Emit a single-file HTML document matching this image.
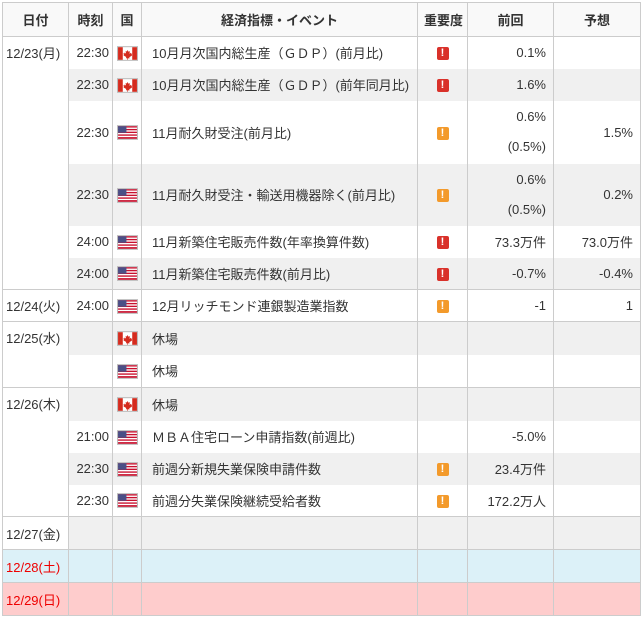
<!DOCTYPE html>
<html><head><meta charset="utf-8"><style>
body{margin:0;background:#fff;font-family:"Liberation Sans","Noto Sans CJK JP",sans-serif;font-size:13px;color:#333}
table{position:absolute;left:2px;top:2px;border-collapse:collapse;table-layout:fixed;width:638px}
td,th{border-left:1px solid #ccc;border-right:1px solid #ccc;padding:0 6px;white-space:nowrap;overflow:hidden}
th{background:#f9f9f9;font-weight:bold;height:33px;border-top:1px solid #ccc;border-bottom:1px solid #ccc;text-align:center}
tr.g td{background:#f0f0f0}
tr.top td{border-top:1px solid #ccc}
td.d{background:#fff!important;vertical-align:top;padding:6px 0 0 3px}
td.t{text-align:right;padding-right:3px}
td.e{padding-left:10px}
td.f{text-align:center;padding:0}
td.i{text-align:center;padding:0}
td.n{text-align:right;padding-right:7px}
td.two{line-height:30px}
tr.sat td{background:#dcf1f8!important;color:#e00}
tr.sun td{background:#fecccc!important;color:#e00}
tr.last td{border-bottom:1px solid #ccc}
.ic{display:inline-block;width:12px;height:13px;border-radius:2px;color:#fff;font-weight:bold;font-size:11px;line-height:13px;vertical-align:middle}
.r{background:#d9312a}.o{background:#f39a2b}
svg{vertical-align:middle}
</style></head><body>
<svg width="0" height="0" style="position:absolute"><defs>
<symbol id="ca" viewBox="0 0 20 14"><rect x=".5" y=".5" width="19" height="13" fill="#fff" stroke="#bbb"/><rect x="1" y="1" width="4.5" height="12" fill="#d52b1e"/><rect x="14.5" y="1" width="4.5" height="12" fill="#d52b1e"/><path d="M10 3.5l1 1.8 1.3-.6-.4 2.6 1.3-1 .3.9 1-.2-.6 1.6.5.4-2.7 1.5.3 1.2H10.3v1.3h-.6V11.5H8.5l.3-1.2-2.7-1.5.5-.4-.6-1.6 1 .2.3-.9 1.3 1-.4-2.6 1.3.6z" fill="#d52b1e"/></symbol>
<symbol id="us" viewBox="0 0 20 14"><rect x=".5" y=".5" width="19" height="13" fill="#fff" stroke="#bbb"/><g fill="#c8102e"><rect x="1" y="1" width="18" height="1.3"/><rect x="1" y="3.6" width="18" height="1.3"/><rect x="1" y="6.2" width="18" height="1.3"/><rect x="1" y="8.8" width="18" height="1.3"/><rect x="1" y="11.4" width="18" height="1.6"/></g><rect x="1" y="1" width="8" height="6.2" fill="#4a4f86"/></symbol>
</defs></svg>
<table>
<colgroup><col style="width:66px"><col style="width:44px"><col style="width:29px"><col style="width:276px"><col style="width:50px"><col style="width:86px"><col style="width:87px"></colgroup>
<tr><th>日付</th><th>時刻</th><th>国</th><th>経済指標・イベント</th><th>重要度</th><th>前回</th><th>予想</th></tr>
<tr class="top" style="height:32px"><td class="d" rowspan="6">12/23(月)</td><td class="t">22:30</td><td class="f"><svg width="21" height="15"><use href="#ca"/></svg></td><td class="e">10月月次国内総生産（ＧＤＰ）(前月比)</td><td class="i"><span class="ic r">!</span></td><td class="n">0.1%</td><td></td></tr>
<tr class="g" style="height:32px"><td class="t">22:30</td><td class="f"><svg width="21" height="15"><use href="#ca"/></svg></td><td class="e">10月月次国内総生産（ＧＤＰ）(前年同月比)</td><td class="i"><span class="ic r">!</span></td><td class="n">1.6%</td><td></td></tr>
<tr style="height:63px"><td class="t">22:30</td><td class="f"><svg width="21" height="15"><use href="#us"/></svg></td><td class="e">11月耐久財受注(前月比)</td><td class="i"><span class="ic o">!</span></td><td class="n two">0.6%<br>(0.5%)</td><td class="n">1.5%</td></tr>
<tr class="g" style="height:62px"><td class="t">22:30</td><td class="f"><svg width="21" height="15"><use href="#us"/></svg></td><td class="e">11月耐久財受注・輸送用機器除く(前月比)</td><td class="i"><span class="ic o">!</span></td><td class="n two">0.6%<br>(0.5%)</td><td class="n">0.2%</td></tr>
<tr style="height:32px"><td class="t">24:00</td><td class="f"><svg width="21" height="15"><use href="#us"/></svg></td><td class="e">11月新築住宅販売件数(年率換算件数)</td><td class="i"><span class="ic r">!</span></td><td class="n">73.3万件</td><td class="n">73.0万件</td></tr>
<tr class="g" style="height:32px"><td class="t">24:00</td><td class="f"><svg width="21" height="15"><use href="#us"/></svg></td><td class="e">11月新築住宅販売件数(前月比)</td><td class="i"><span class="ic r">!</span></td><td class="n">-0.7%</td><td class="n">-0.4%</td></tr>
<tr class="top" style="height:32px"><td class="d" style="vertical-align:middle;padding-top:0">12/24(火)</td><td class="t">24:00</td><td class="f"><svg width="21" height="15"><use href="#us"/></svg></td><td class="e">12月リッチモンド連銀製造業指数</td><td class="i"><span class="ic o">!</span></td><td class="n">-1</td><td class="n">1</td></tr>
<tr class="top g" style="height:33px"><td class="d" rowspan="2">12/25(水)</td><td></td><td class="f"><svg width="21" height="15"><use href="#ca"/></svg></td><td class="e">休場</td><td></td><td></td><td></td></tr>
<tr style="height:33px"><td></td><td class="f"><svg width="21" height="15"><use href="#us"/></svg></td><td class="e">休場</td><td></td><td></td><td></td></tr>
<tr class="top g" style="height:33px"><td class="d" rowspan="4">12/26(木)</td><td></td><td class="f"><svg width="21" height="15"><use href="#ca"/></svg></td><td class="e">休場</td><td></td><td></td><td></td></tr>
<tr style="height:32px"><td class="t">21:00</td><td class="f"><svg width="21" height="15"><use href="#us"/></svg></td><td class="e">ＭＢＡ住宅ローン申請指数(前週比)</td><td></td><td class="n">-5.0%</td><td></td></tr>
<tr class="g" style="height:32px"><td class="t">22:30</td><td class="f"><svg width="21" height="15"><use href="#us"/></svg></td><td class="e">前週分新規失業保険申請件数</td><td class="i"><span class="ic o">!</span></td><td class="n">23.4万件</td><td></td></tr>
<tr style="height:32px"><td class="t">22:30</td><td class="f"><svg width="21" height="15"><use href="#us"/></svg></td><td class="e">前週分失業保険継続受給者数</td><td class="i"><span class="ic o">!</span></td><td class="n">172.2万人</td><td></td></tr>
<tr class="top g" style="height:33px"><td class="d" style="vertical-align:middle;padding-top:0">12/27(金)</td><td></td><td></td><td></td><td></td><td></td><td></td></tr>
<tr class="top sat" style="height:33px"><td class="d" style="vertical-align:middle;padding-top:0">12/28(土)</td><td></td><td></td><td></td><td></td><td></td><td></td></tr>
<tr class="top sun last" style="height:33px"><td class="d" style="vertical-align:middle;padding-top:0">12/29(日)</td><td></td><td></td><td></td><td></td><td></td><td></td></tr>
</table>
</body></html>
